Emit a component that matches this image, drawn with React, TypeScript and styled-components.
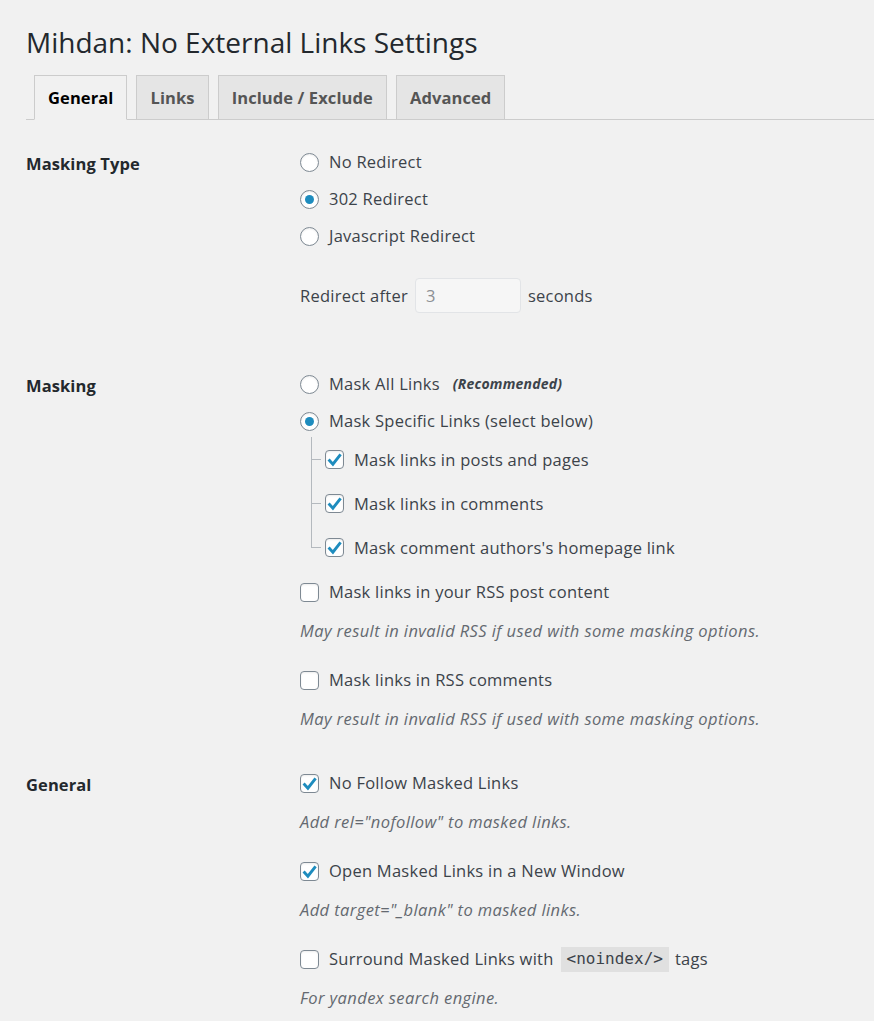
import React from "react";
import styled, { createGlobalStyle } from "styled-components";

const GlobalStyle = createGlobalStyle`
  html, body { margin: 0; padding: 0; background: #f1f1f1; }
  body {
    font-family: "Open Sans", "Noto Sans", sans-serif;
    color: #3c434a;
    font-size: 16.5px;
    letter-spacing: 0.25px;
    -webkit-font-smoothing: antialiased;
  }
`;

const Page = styled.div`
  padding: 0 0 40px 26px;
  min-height: 1021px;
  box-sizing: border-box;
`;

const Title = styled.h1`
  margin: 0;
  padding-top: 24px;
  font-size: 28px;
  line-height: 36px;
  font-weight: 400;
  letter-spacing: 0;
  color: #23282d;
`;

const TabBar = styled.nav`
  display: flex;
  gap: 9px;
  margin-top: 15px;
  padding-left: 8px;
  border-bottom: 1px solid #ccc;
`;

const Tab = styled.span<{ $active?: boolean }>`
  box-sizing: border-box;
  height: 45px;
  margin-bottom: -1px;
  display: flex;
  align-items: center;
  padding: 0 13px;
  border: 1px solid #ccc;
  border-bottom-color: ${(p) => (p.$active ? "#f1f1f1" : "#ccc")};
  background: ${(p) => (p.$active ? "#f1f1f1" : "#e5e5e5")};
  color: ${(p) => (p.$active ? "#000" : "#555")};
  font-size: 16.5px;
  letter-spacing: 0.1px;
  font-weight: 700;
`;

const Section = styled.section<{ $top: number }>`
  display: grid;
  grid-template-columns: 274px 1fr;
  padding-top: ${(p) => p.$top}px;
`;

const Label = styled.div`
  margin-top: 4px;
  line-height: 22px;
  font-weight: 700;
  letter-spacing: 0.1px;
  color: #23282d;
`;

const Field = styled.div`
  display: flex;
  flex-direction: column;
`;

const Group = styled.div`
  display: flex;
  flex-direction: column;
  gap: 11px;
`;

const Option = styled.label<{ $gap?: number }>`
  display: flex;
  align-items: center;
  gap: 10px;
  height: 26px;
  line-height: 22px;
  margin-top: ${(p) => p.$gap ?? 0}px;
  white-space: nowrap;
`;

const RadioBox = styled.span<{ $on?: boolean }>`
  box-sizing: border-box;
  width: 19px;
  height: 19px;
  flex: none;
  border: 1px solid #7e8993;
  border-radius: 50%;
  background: #fff;
  box-shadow: inset 0 1px 2px rgba(0, 0, 0, 0.08);
  display: flex;
  align-items: center;
  justify-content: center;
  &::after {
    content: "";
    display: ${(p) => (p.$on ? "block" : "none")};
    width: 9px;
    height: 9px;
    border-radius: 50%;
    background: #1e8cbe;
  }
`;

const CheckBox = styled.span`
  box-sizing: border-box;
  width: 19px;
  height: 19px;
  flex: none;
  border: 1px solid #7e8993;
  border-radius: 4px;
  background: #fff;
  box-shadow: inset 0 1px 2px rgba(0, 0, 0, 0.08);
  display: flex;
  align-items: center;
  justify-content: center;
`;

const CheckMark = styled.svg`
  flex: none;
  width: 19px;
  height: 19px;
  margin: -1px;
`;

const Note = styled.em`
  margin-left: 3px;
  font-size: 14px;
  font-weight: 700;
  letter-spacing: 0.2px;
`;

const RedirectRow = styled.div`
  display: flex;
  align-items: center;
  gap: 7px;
  margin-top: 29px;
  height: 35px;
`;

const NumberInput = styled.input`
  box-sizing: border-box;
  width: 106px;
  height: 35px;
  padding: 0 10px;
  border: 1px solid #e2e4e7;
  border-radius: 4px;
  background: #f6f6f6;
  color: #8c8f94;
  font: inherit;
  letter-spacing: inherit;
  outline: none;
`;

const Nested = styled.div`
  display: flex;
  flex-direction: column;
  margin: 3px 0 0 11px;
`;

const NestedItem = styled.label`
  display: flex;
  align-items: center;
  height: 44px;
  white-space: nowrap;
`;

const Branch = styled.span<{ $last?: boolean }>`
  align-self: stretch;
  width: 10px;
  flex: none;
  margin-right: 4px;
  background:
    linear-gradient(#b4b9be, #b4b9be) left top / 1px ${(p) => (p.$last ? "50%" : "100%")} no-repeat,
    linear-gradient(#b4b9be, #b4b9be) left center / 100% 1px no-repeat;
`;

const NestedText = styled.span`
  margin-left: 10px;
`;

const Desc = styled.p`
  margin: 15px 0 0;
  line-height: 22px;
  font-style: italic;
  letter-spacing: 0.4px;
  color: #646970;
`;

const Code = styled.code`
  display: inline-flex;
  align-items: center;
  height: 25px;
  padding: 0 6px;
  margin: 0 -4px 0 -3px;
  background: rgba(0, 0, 0, 0.07);
  color: #3c434a;
  font-family: "DejaVu Sans Mono", "Liberation Mono", monospace;
  font-size: 16px;
  letter-spacing: 0;
`;

const Radio = ({ on }: { on?: boolean }) => <RadioBox $on={on} />;

const Check = ({ on }: { on?: boolean }) => (
  <CheckBox>
    {on && (
      <CheckMark viewBox="0 0 19 19">
        <path
          d="M3.6 9.6 L7.9 14.2 L15.6 4.4"
          fill="none"
          stroke="#1e8cbe"
          strokeWidth="2.9"
          strokeLinejoin="miter"
        />
      </CheckMark>
    )}
  </CheckBox>
);

export default function App() {
  return (
    <Page>
      <GlobalStyle />
      <Title>Mihdan: No External Links Settings</Title>
      <TabBar>
        <Tab $active>General</Tab>
        <Tab>Links</Tab>
        <Tab>Include / Exclude</Tab>
        <Tab>Advanced</Tab>
      </TabBar>

      <Section $top={29}>
        <Label>Masking Type</Label>
        <Field>
          <Group>
            <Option>
              <Radio />
              No Redirect
            </Option>
            <Option>
              <Radio on />
              302 Redirect
            </Option>
            <Option>
              <Radio />
              Javascript Redirect
            </Option>
          </Group>
          <RedirectRow>
            Redirect after
            <NumberInput value="3" readOnly />
            seconds
          </RedirectRow>
        </Field>
      </Section>

      <Section $top={58}>
        <Label>Masking</Label>
        <Field>
          <Group>
            <Option>
              <Radio />
              Mask All Links
              <Note>(Recommended)</Note>
            </Option>
            <Option>
              <Radio on />
              Mask Specific Links (select below)
            </Option>
          </Group>
          <Nested>
            <NestedItem>
              <Branch />
              <Check on />
              <NestedText>Mask links in posts and pages</NestedText>
            </NestedItem>
            <NestedItem>
              <Branch />
              <Check on />
              <NestedText>Mask links in comments</NestedText>
            </NestedItem>
            <NestedItem>
              <Branch $last />
              <Check on />
              <NestedText>Mask comment authors's homepage link</NestedText>
            </NestedItem>
          </Nested>
          <Option $gap={10}>
            <Check />
            Mask links in your RSS post content
          </Option>
          <Desc>May result in invalid RSS if used with some masking options.</Desc>
          <Option $gap={25}>
            <Check />
            Mask links in RSS comments
          </Option>
          <Desc>May result in invalid RSS if used with some masking options.</Desc>
        </Field>
      </Section>

      <Section $top={40}>
        <Label>General</Label>
        <Field>
          <Option>
            <Check on />
            No Follow Masked Links
          </Option>
          <Desc>Add rel="nofollow" to masked links.</Desc>
          <Option $gap={25}>
            <Check on />
            Open Masked Links in a New Window
          </Option>
          <Desc>Add target="_blank" to masked links.</Desc>
          <Option $gap={25}>
            <Check />
            Surround Masked Links with <Code>&lt;noindex/&gt;</Code> tags
          </Option>
          <Desc>For yandex search engine.</Desc>
        </Field>
      </Section>
    </Page>
  );
}
